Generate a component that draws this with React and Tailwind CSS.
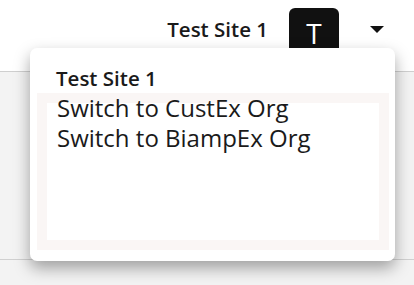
import { useState } from "react";

const App = () => {

    const [open] = useState(true);

    const orgs = ["Switch to CustEx Org", "Switch to BiampEx Org"];

    return (

        <div className="relative h-[285px] w-[414px] overflow-hidden bg-[#f3f3f3] font-['Open_Sans',sans-serif] text-[#1a1a1a]">

            {/* Header */}

            <header className="h-[72px] border-b border-[#cfcfcf] bg-white">

                <div className="flex h-[58px] items-center justify-end pr-[30px]">

                    <span className="text-[20.5px] font-semibold leading-none">
                        Test Site 1
                    </span>

                    <div className="ml-[21px] mt-[8px] flex h-[50px] w-[50px] items-center justify-center rounded-[6px] bg-[#111111] text-[28px] leading-none text-white">
                        T
                    </div>

                    <span className="ml-[31px] h-0 w-0 border-x-[7px] border-t-[7px] border-x-transparent border-t-[#111111]" />

                </div>

            </header>

            {/* Body */}

            <div className="h-[188px] border-b border-[#d0d0d0] bg-[#f3f3f3]" />

            {/* Dropdown */}

            {open && (

                <div className="absolute left-[30px] top-[48px] h-[213px] w-[365px] rounded-[7px] bg-white shadow-[0_7px_16px_rgba(0,0,0,0.35)]">

                    <div className="pl-[26px] pt-[17px] text-[20.5px] font-semibold leading-[26px]">
                        Test Site 1
                    </div>

                    <div className="ml-[7px] mr-[6px] mt-[2px] h-[157px] border-[10px] border-[#faf6f5] bg-white">

                        <ul className="-mt-[10px] pl-[10px]">

                            {orgs.map((org) => (

                                <li key={org} className="text-[24px] leading-[30px]">
                                    {org}
                                </li>

                            ))}

                        </ul>

                    </div>

                </div>

            )}

        </div>

    );

};

export default App;
